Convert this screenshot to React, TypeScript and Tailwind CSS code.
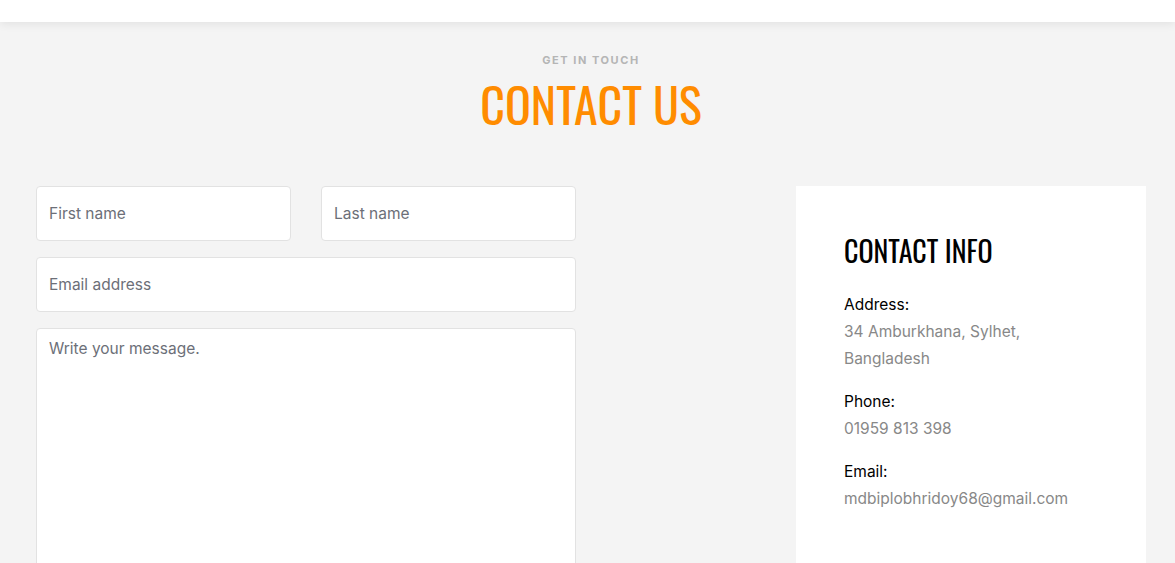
import React from 'react'

const heading = { fontFamily: '"Oswald", "Liberation Sans Narrow", "DejaVu Sans Condensed", sans-serif' }

function Field({ placeholder }: { placeholder: string }) {
  return (
    <input
      type="text"
      placeholder={placeholder}
      className="h-[55px] w-full rounded-[4px] border border-[#e2e2e2] bg-white px-[12px] text-[15.5px] text-[#495057] placeholder:text-[#6c6f78] outline-none"
    />
  )
}

export default function App() {
  return (
    <div className="min-h-[563px] bg-[#f4f4f4] font-['Inter',sans-serif]">
      <header className="h-[22px] bg-white shadow-[0_2px_10px_rgba(0,0,0,0.08)]" />

      <section className="ml-[36px] w-[1110px] pt-[30px]">
        <div className="text-center">
          <p className="text-[11px] leading-[16px] font-bold uppercase tracking-[0.14em] text-[#b5b5b5]">Get in touch</p>
          <h2 style={heading} className="mt-[6px] text-[48px] leading-[60px] font-normal uppercase text-[#ff8c00]">
            Contact Us
          </h2>
        </div>

        <div className="mt-[52px] flex justify-between">
          <form className="flex w-[540px] flex-col gap-[16px]">
            <div className="grid grid-cols-2 gap-[30px]">
              <Field placeholder="First name" />
              <Field placeholder="Last name" />
            </div>
            <Field placeholder="Email address" />
            <textarea
              placeholder="Write your message."
              className="h-[260px] w-full resize-none rounded-[4px] border border-[#e2e2e2] bg-white px-[12px] py-[8px] text-[15.5px] text-[#495057] placeholder:text-[#6c6f78] outline-none"
            />
          </form>

          <aside className="w-[350px] bg-white px-[48px] pt-[45px] pb-[50px]">
            <h3 style={heading} className="text-[28px] leading-[40px] uppercase text-black">
              Contact Info
            </h3>
            <div className="mt-[20px] text-[15.5px] leading-[27px]">
              <p className="text-black">Address:</p>
              <p className="text-[#888888]">34 Amburkhana, Sylhet,<br />Bangladesh</p>
              <p className="mt-[16px] text-black">Phone:</p>
              <p className="text-[#888888]">01959 813 398</p>
              <p className="mt-[16px] text-black">Email:</p>
              <p className="text-[#888888]">mdbiplobhridoy68@gmail.com</p>
            </div>
          </aside>
        </div>
      </section>
    </div>
  )
}
